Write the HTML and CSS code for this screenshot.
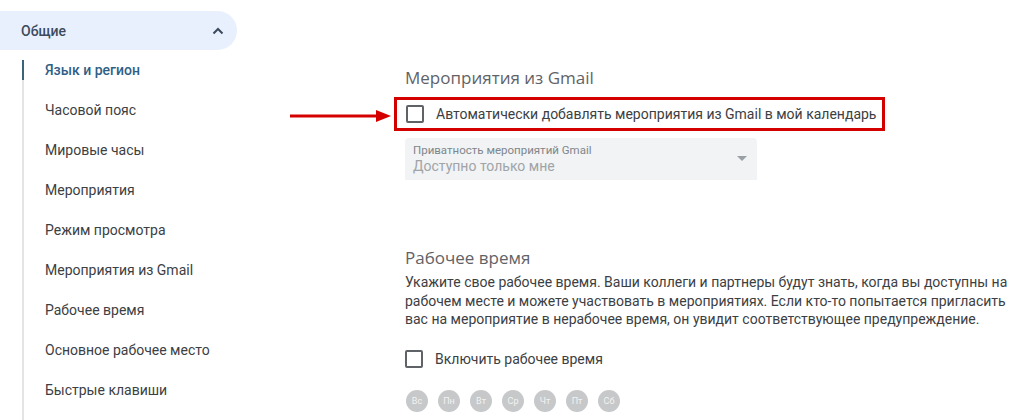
FILE: index.html
```html
<!DOCTYPE html>
<html lang="ru">
<head>
<meta charset="utf-8">
<link rel="stylesheet" href="styles.css">
</head>
<body>
<div class="page">
  <nav class="sidebar">
    <div class="group">
      <span>Общие</span>
      <svg class="chev" width="12" height="8" viewBox="0 0 12 8"><path d="M1.5 6.5 L6 2 L10.5 6.5" fill="none" stroke="#3c4a5c" stroke-width="2"/></svg>
    </div>
    <ul class="nav">
      <li class="active">Язык и регион</li>
      <li>Часовой пояс</li>
      <li>Мировые часы</li>
      <li>Мероприятия</li>
      <li>Режим просмотра</li>
      <li>Мероприятия из Gmail</li>
      <li>Рабочее время</li>
      <li>Основное рабочее место</li>
      <li>Быстрые клавиши</li>
    </ul>
  </nav>
  <main class="main">
    <section class="sec gmail">
      <h2>Мероприятия из Gmail</h2>
      <div class="highlight">
        <svg class="arrow" width="104" height="16" viewBox="0 0 104 16"><line x1="0" y1="8" x2="90" y2="8" stroke="#d40000" stroke-width="3"/><polygon points="86,2 101,8 86,14" fill="#d40000"/></svg>
        <label class="check"><span class="box"></span><span>Автоматически добавлять мероприятия из Gmail в мой календарь</span></label>
      </div>
      <div class="select">
        <div class="select-label">Приватность мероприятий Gmail</div>
        <div class="select-value">Доступно только мне</div>
        <span class="caret"></span>
      </div>
    </section>
    <section class="sec work">
      <h2>Рабочее время</h2>
      <p>Укажите свое рабочее время. Ваши коллеги и партнеры будут знать, когда вы доступны на рабочем месте и можете участвовать в мероприятиях. Если кто-то попытается пригласить вас на мероприятие в нерабочее время, он увидит соответствующее предупреждение.</p>
      <label class="check plain"><span class="box"></span><span>Включить рабочее время</span></label>
      <div class="days">
        <span>Вс</span><span>Пн</span><span>Вт</span><span>Ср</span><span>Чт</span><span>Пт</span><span>Сб</span>
      </div>
    </section>
  </main>
</div>
</body>
</html>
```

FILE: styles.css
```css
* { box-sizing: border-box; }
html, body { margin: 0; padding: 0; background: #fff; }
body {
  font-family: Roboto, "Liberation Sans", sans-serif;
  color: #3c4043;
  font-size: 14px;
  width: 1031px;
  height: 420px;
  overflow: hidden;
}
.page { display: flex; }
.sidebar { width: 237px; flex: none; padding-top: 11px; }
.group {
  height: 39px;
  background: #e8f0fe;
  border-radius: 0 20px 20px 0;
  display: flex;
  align-items: center;
  justify-content: space-between;
  padding: 0 13px 0 21px;
  font-size: 14px;
  font-weight: 500;
  color: #3c4a5c;
}
.nav {
  list-style: none;
  margin: 0 0 0 22px;
  padding: 0 0 12px 0;
  background: linear-gradient(#e4e4e4, #e4e4e4) no-repeat 0 10px / 2px calc(100% - 10px);
}
.nav li {
  height: 40px;
  line-height: 40px;
  padding-left: 23px;
  color: #3c4043;
  white-space: nowrap;
}
.nav li.active {
  color: #2f5f86;
  font-weight: 500;
  background: linear-gradient(#3a6478, #3a6478) no-repeat 0 10px / 2px 20px;
}
.main { padding-left: 168px; padding-top: 66px; flex: 1; }
.sec h2 {
  margin: 0;
  font-family: "Open Sans", Roboto, sans-serif;
  font-weight: 400;
  font-size: 17px;
  line-height: 24px;
  color: #5f6368;
}
.highlight {
  position: relative;
  margin: 7px 0 0 -11px;
  width: fit-content;
  border: 3px solid #d40000;
  padding: 0 6px 0 9px;
  height: 34px;
  display: flex;
  align-items: center;
}
.arrow { position: absolute; left: -107px; top: 8px; }
.check { display: flex; align-items: center; gap: 12px; color: #3c4043; font-size: 14px; }
.box {
  width: 18px; height: 18px;
  border: 2px solid #5f6368;
  border-radius: 2px;
  flex: none;
}
.select {
  position: relative;
  margin-top: 7px;
  width: 352px;
  height: 42px;
  background: #f1f3f4;
  border-radius: 4px 4px 0 0;
  padding: 5px 0 0 8px;
  color: #9aa0a6;
}
.select-label { font-size: 11.5px; line-height: 14px; color: #80868b; }
.select-value { font-size: 14px; line-height: 18px; color: #a0a4a8; }
.caret {
  position: absolute; right: 10px; top: 18px;
  border-left: 5px solid transparent; border-right: 5px solid transparent;
  border-top: 5px solid #9aa0a6;
}
.work { margin-top: 66px; }
.work p { margin: 3px 0 0; width: 610px; line-height: 18.5px; font-size: 14px; color: #3c4043; }
.check.plain { margin-top: 20px; height: 20px; }
.days { display: flex; gap: 10px; margin-top: 21px; padding-left: 1px; }
.days span {
  width: 22px; height: 22px; border-radius: 50%;
  background: #c6c8ca; color: #f3f3f3;
  font-size: 9px;
  display: flex; align-items: center; justify-content: center;
}
```
